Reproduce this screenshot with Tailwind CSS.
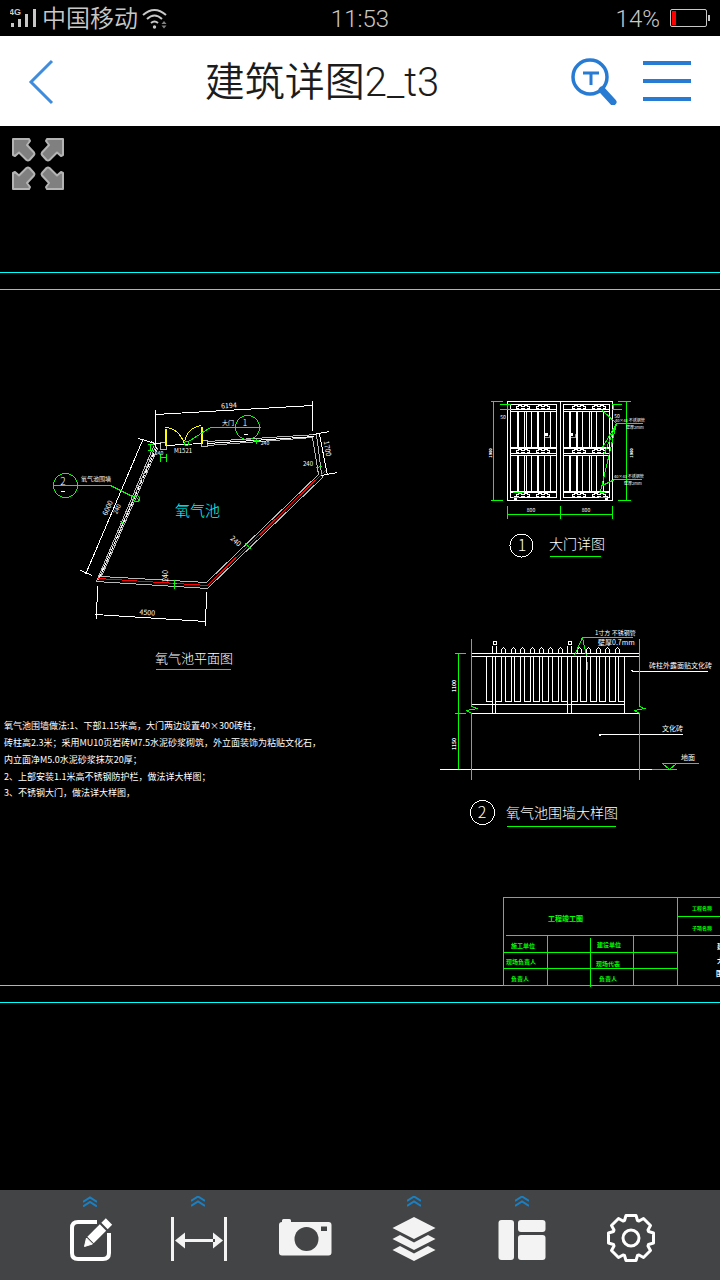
<!DOCTYPE html>
<html lang="zh-CN">
<head>
    <meta charset="UTF-8">
    <meta name="viewport" content="width=device-width, initial-scale=1.0">
    <title>建筑详图2_t3</title>
    <script src="https://cdn.jsdelivr.net/npm/@tailwindcss/browser@4"></script>
</head>
<body class="flex min-h-screen flex-col bg-black font-['Roboto','Noto_Sans_CJK_SC',sans-serif]">
    <!-- Status bar -->
    <div class="grid h-9 grid-cols-3 items-center bg-black px-[10px] pt-[2px] text-2xl font-[350] text-[#c8c8c8]">
        <div class="flex items-center gap-1">
            <svg class="h-6 w-7" viewBox="0 0 28 24" fill="currentColor">
                <text x="-1" y="8" font-size="9" font-weight="700" font-family="Liberation Sans">4G</text>
                <path d="M1 16h3v4H1zM8 12h3v8H8zM15 7h3v13h-3zM23 2h3v18h-3z"/>
            </svg>
            <span class="whitespace-nowrap">中国移动</span>
            <svg class="h-6 w-[26px]" viewBox="0 0 26 24" fill="none" stroke="currentColor" stroke-width="2">
                <path d="M1 8Q12.500 -2 24 8M5 12Q12.500 5 20 12M9 16Q12.500 13 16 16"/>
                <circle cx="12.500" cy="20" r="1.700" fill="currentColor" stroke="none"/>
                <path d="M19.500 17l2.500-3 2.500 3zM19.500 18.500l2.500 3 2.500-3z" fill="#808080" stroke="none"/>
            </svg>
        </div>
        <div class="text-center">11:53</div>
        <div class="flex items-center justify-end gap-[10px]">
            <span>14%</span>
            <svg class="h-5 w-10" viewBox="0 0 40 20">
                <rect x="0.500" y="0.500" width="36" height="17" rx="1.500" fill="none" stroke="currentColor"/>
                <path d="M38 6h2v6h-2z" fill="currentColor"/>
                <path d="M2 2h4v14H2z" fill="#ff0000"/>
            </svg>
        </div>
    </div>

    <!-- Header -->
    <header class="flex h-[90px] items-center bg-white">
        <button class="flex h-full w-20 items-center pl-7" aria-label="返回">
            <svg class="h-12 w-7" viewBox="0 0 28 48" fill="none" stroke="#3f8cdc" stroke-width="3">
                <path d="M24 4L3 25L24 46"/>
            </svg>
        </button>
        <h1 class="flex-1 pt-1 text-center text-[40px] leading-[48px] font-[350] text-[#1c1c1c]">建筑详图2_t3</h1>
        <div class="flex items-center gap-6 pr-7 pl-[6px]">
            <button aria-label="搜索文字">
                <svg class="h-12 w-12" viewBox="0 0 48 48" fill="none" stroke="#287bd2">
                    <circle cx="20" cy="20" r="17" stroke-width="3.500"/>
                    <path d="M13 16h16M21 16v12" stroke-width="3"/>
                    <path d="M32 33L43 45" stroke-width="7" stroke-linecap="round"/>
                </svg>
            </button>
            <button aria-label="菜单">
                <svg class="h-12 w-[50px]" viewBox="0 0 50 48" stroke="#287bd2" stroke-width="4">
                    <path d="M1 6h48M1 24h48M1 42h48"/>
                </svg>
            </button>
        </div>
    </header>

    <!-- Drawing -->
    <main class="relative flex-1 bg-black">
        <svg class="block h-auto w-full font-['Noto_Sans_CJK_SC',sans-serif]" viewBox="0 126 720 1064">
            <defs>
                <path id="clasp" d="M0 -2h3v1h3v-1h3v1h2v2h-2v1H6v-1H3v1H0v-1h-2v-2h2z"/>
                <path id="picket" d="M-2 653v-4L0 647L2 649V653"/>
                <path id="post" d="M-2 653v-8M2 653v-8M-1 644v-3h3v3z"/>
            </defs>
            <g transform="translate(.5 .5)" fill="none" stroke-width="1" shape-rendering="crispEdges">
                <!-- Sheet frame -->
                <path stroke="#00ffff" d="M-1 272H720M-1 289H720M-1 985H503M-1 1002H720"/>

                <!-- Plan: walls -->
                <path stroke="#b8b8b8" d="M207 441L316 434L321 473L322 477L207 588L96 581L153 446M207 445L312 437L318 474L206 582L101 576L157 448"/>
                <path stroke="#b8b8b8" d="M98 580L155 446M160 442h6v7h-6zM201 440h6v6h-6z"/>
                <path stroke="#fff" stroke-dasharray="4 2" d="M99 577L156 447"/>
                <path stroke="#fff" d="M207 443L314 436M166 445L201 443M154 443h6M151 441l5 5"/>
                <path stroke="#ff0000" d="M98 578L207 585L326 469"/>
                <!-- Plan: dimensions -->
                <path stroke="#fff" d="M155 409V446M155 414L312 405M312 400V430M142 440L85 574M138 438L155 443M80 570L92 575M95 614L205 621M97 586L96 619M206 592L205 626M319 434L327 475M313 434L329 431M321 475L337 472"/>
                <!-- Plan: door -->
                <path stroke="#ffff00" stroke-width="2" d="M165 445V428M201 443V426"/>
                <path stroke="#ffff00" d="M165 427Q178 428 184 443M184 441Q187 427 201 425"/>
                <path stroke="#00ff00" d="M53 485H110L134 497M188 441L210 427H260M147 444h6M150 444v6M147 450h6M160 453v8M166 453v8M160 457h6M120 521l5 3M134 495l5 5M174 579v9M172 583h4M245 543l6 6M316 467l6-1M256 438v5M253 440h5"/>
                <circle stroke="#00ff00" cx="65" cy="485" r="12"/>
                <circle stroke="#00ff00" cx="247" cy="427" r="12"/>
                <circle stroke="#00ff00" cx="136" cy="498" r="3"/>
                <circle stroke="#00ff00" cx="186" cy="443" r="2"/>
                <path stroke="#fff" d="M60 491h4M243 434h4"/>
                <path stroke="#00ff00" d="M155 669H230M549 556H600M506 826H615"/>

                <!-- Door detail -->
                <path stroke="#fff" d="M507 401H612V500H507ZM560 401V500M510 404H556V497H510ZM563 404H609V497H563Z"/>
                <path stroke="#fff" d="M510 409H556M510 411H556M510 447H556M510 448H556M510 453H556M510 455H556M510 491H556M510 492H556M563 409H609M563 411H609M563 447H609M563 448H609M563 453H609M563 455H609M563 491H609M563 492H609"/>
                <path stroke="#fff" d="M517 411V447M518 411V447M524 411V447M526 411V447M531 411V447M537 411V447M538 411V447M544 411V447M550 411V447M569 411V447M570 411V447M576 411V447M577 411V447M582 411V447M589 411V447M591 411V447M596 411V447M603 411V447"/>
                <path stroke="#fff" d="M517 455V491M518 455V491M524 455V491M526 455V491M531 455V491M537 455V491M538 455V491M544 455V491M550 455V491M569 455V491M570 455V491M576 455V491M577 455V491M582 455V491M589 455V491M591 455V491M596 455V491M603 455V491"/>
                <g stroke="#fff">
                    <use href="#clasp" x="518" y="407"/><use href="#clasp" x="538" y="407"/><use href="#clasp" x="574" y="407"/><use href="#clasp" x="594" y="407"/>
                    <use href="#clasp" x="518" y="451"/><use href="#clasp" x="538" y="451"/><use href="#clasp" x="574" y="451"/><use href="#clasp" x="594" y="451"/>
                    <use href="#clasp" x="518" y="495"/><use href="#clasp" x="538" y="495"/><use href="#clasp" x="574" y="495"/><use href="#clasp" x="594" y="495"/>
                </g>
                <path fill="#fff" d="M544 432h3v3h-3zM569 432h3v3h-3zM513 495h3v4h-3zM604 495h3v4h-3z"/>
                <path stroke="#00ff00" d="M493 401V500M490 401H502M490 500H502M626 401V500M617 401H630M617 500H630M507 514H612M507 505V518M560 505V518M612 505V518M499 404H510M499 409H510M507 404V409M611 404H621M611 409H621M613 404V409M544 437h5v-3M570 437h5v-4M512 492h11M512 497h6M598 492h6M598 497h8"/>
                <path stroke="#00ff00" d="M642 423H616L602 410M616 423L602 447M616 423L603 455M616 423L600 491M641 479H614L602 485"/>
                <circle stroke="#fff" cx="521" cy="545" r="11.500"/>

                <!-- Fence detail -->
                <path stroke="#fff" d="M471 653H639M471 656H639M471 704H624M471 713H639M624 656V713M492 701V713M495 701V713M567 701V713M571 701V713"/>
                <path stroke="#fff" d="M486 656h6v45h-6zM495 656h6v45h-6zM505 656h6v45h-6zM514 656h6v45h-6zM524 656h6v45h-6zM533 656h6v45h-6zM542 656h6v45h-6zM552 656h6v45h-6zM561 656h6v45h-6zM571 656h6v45h-6zM580 656h6v45h-6zM590 656h6v45h-6zM599 656h6v45h-6zM609 656h6v45h-6zM618 656h6v45h-6z"/>
                <g stroke="#fff">
                    <use href="#post" x="494"/><use href="#picket" x="503"/><use href="#picket" x="513"/><use href="#picket" x="522"/><use href="#picket" x="532"/>
                    <use href="#picket" x="541"/><use href="#picket" x="550"/><use href="#picket" x="560"/><use href="#post" x="569"/><use href="#picket" x="579"/>
                    <use href="#picket" x="588"/><use href="#picket" x="598"/><use href="#picket" x="607"/><use href="#picket" x="617"/>
                </g>
                <path stroke="#fff" d="M439 769H676M631 671H707M598 734H682M630 670h2M598 735h2"/>
                <path stroke="#00ff00" d="M471 638V706L477 708L466 710L471 713V779M639 638V706L644 708L634 710L639 713V779M458 653V768M454 653H465M454 713H465M632 637H582L574 655M582 637L586 656M587 661V669M651 769H676M661 763H698M662 763L669 769L676 763"/>
                <circle stroke="#fff" cx="482" cy="812" r="12"/>

                <!-- Title block -->
                <path stroke="#00ff00" d="M503 985V897H720M677 897V985M677 916H720M505 935H720M503 952H677M503 968H677M503 985H720M547 935V985M590 937V986M633 935V985"/>
            </g>

            <!-- Drawing labels -->
            <g fill="#fff" font-size="13" font-weight="300">
                <text x="155" y="663">氧气池平面图</text>
                <text x="549" y="549" font-size="14">大门详图</text>
                <text x="506" y="818" font-size="14">氧气池围墙大样图</text>
                <text x="175" y="516" font-size="15" fill="#00ffff">氧气池</text>
            </g>
            <g fill="#fff" font-size="16" font-weight="300" text-anchor="middle">
                <text x="522" y="551">1</text>
                <text x="482" y="818">2</text>
                <text x="63" y="485" font-size="10">2</text>
                <text x="245" y="426" font-size="9">1</text>
            </g>
            <g fill="#fff" font-size="9">
                <text x="4" y="729">氧气池围墙做法:1、下部1.15米高，大门两边设置40×300砖柱，</text>
                <text x="4" y="746">砖柱高2.3米；采用MU10页岩砖M7.5水泥砂浆砌筑，外立面装饰为粘贴文化石，</text>
                <text x="4" y="763">内立面净M5.0水泥砂浆抹灰20厚；</text>
                <text x="4" y="780">2、上部安装1.1米高不锈钢防护栏，做法详大样图；</text>
                <text x="4" y="796">3、不锈钢大门，做法详大样图，</text>
            </g>
            <g fill="#fff" font-size="7">
                <text x="81" y="481" font-size="6">氧气池围墙</text>
                <text x="222" y="425" font-size="6">大门</text>
                <text x="649" y="668">砖柱外露面贴文化砖</text>
                <text x="662" y="731">文化砖</text>
                <text x="681" y="760">地面</text>
                <text x="595" y="635" font-size="6">1寸方 不锈钢管</text>
                <text x="598" y="645">壁厚0.7mm</text>
                <text x="615" y="422" font-size="4">40×40 不锈钢管</text>
                <text x="626" y="429" font-size="4">壁厚2mm</text>
                <text x="614" y="478" font-size="4">40×40 不锈钢管</text>
                <text x="624" y="485" font-size="4">壁厚2mm</text>
            </g>
            <g fill="#fff" font-size="7" text-anchor="middle">
                <text transform="translate(229 408) rotate(-3)">6194</text>
                <text transform="translate(147 615) rotate(4)">4500</text>
                <text transform="translate(110 509) rotate(-66)">6000</text>
                <text transform="translate(119 510) rotate(-66)" font-size="6">240</text>
                <text transform="translate(168 576) rotate(-90)">240</text>
                <text transform="translate(234 543) rotate(42)">240</text>
                <text transform="translate(325 449) rotate(80)">1700</text>
                <text x="308" y="466" font-size="6">240</text>
                <text x="265" y="445" font-size="5">240</text>
                <text x="183" y="453" font-size="6">M1521</text>
                <text x="159" y="455" font-size="5">240</text>
                <text x="531" y="512" font-size="5">800</text>
                <text x="586" y="512" font-size="5">800</text>
                <text x="503" y="419" font-size="5">50</text>
                <text x="617" y="418" font-size="5">50</text>
                <g font-weight="700">
                    <text transform="translate(492 453) rotate(-90)" font-size="4">1900</text>
                    <text transform="translate(633 453) rotate(-90)" font-size="4">1900</text>
                    <text transform="translate(456 686) rotate(-90)" font-size="5">1100</text>
                    <text transform="translate(456 744) rotate(-90)" font-size="5">1150</text>
                </g>
            </g>
            <g fill="#00ff00" font-size="6" font-weight="700">
                <text x="548" y="921" font-size="7">工程竣工图</text>
                <text x="511" y="948">施工单位</text>
                <text x="506" y="964">现场负责人</text>
                <text x="511" y="981">负责人</text>
                <text x="597" y="947">建设单位</text>
                <text x="596" y="966">现场代表</text>
                <text x="599" y="981">负责人</text>
                <text x="692" y="910" font-size="5">工程名称</text>
                <text x="692" y="930" font-size="5">子项名称</text>
            </g>
            <!-- Column that runs off the sheet view -->
            <g fill="#fff" font-size="7" font-weight="700">
                <text x="717" y="949">建</text>
                <text x="717" y="963">大</text>
                <text x="716" y="976">围</text>
            </g>
        </svg>
        <button class="absolute top-[11px] left-[11px]" aria-label="全屏">
            <svg class="h-[54px] w-[54px]" viewBox="0 0 54 54" fill="#808080" stroke="#b4b4b4" stroke-width="2" stroke-linejoin="round">
                <path id="arrow" d="M2 2H18L19 4L16 8L23 15.500Q24 17 23 18L18.500 23Q17 24 15.500 23L8 15.500L4 19L2 18Z"/>
                <use href="#arrow" transform="matrix(-1 0 0 1 54 0)"/>
                <use href="#arrow" transform="matrix(1 0 0 -1 0 54)"/>
                <use href="#arrow" transform="matrix(-1 0 0 -1 54 54)"/>
            </svg>
        </button>
    </main>

    <!-- Toolbar -->
    <nav class="grid h-[90px] grid-cols-6 bg-[#434445] px-9">
        <button class="flex flex-col items-center gap-[6px] pt-[6px]" aria-label="编辑">
            <svg class="h-[11px] w-[14px]" viewBox="0 0 14 11" fill="none" stroke="#1a80c4" stroke-width="2"><path d="M0 6L7 1.500L14 6M0 10.500L7 6L14 10.500"/></svg>
            <svg class="h-[52px] w-[60px]" viewBox="0 0 60 52" fill="none" stroke="#fff">
                <path d="M37 9H18Q12 9 12 15V40Q12 46 18 46H43Q49 46 49 40V20" stroke-width="4"/>
                <path d="M24.500 33.500L26.500 25L32.500 31Z" fill="#fff" stroke-width="1"/>
                <path d="M30.500 27L43 14.500M44.500 13L49 8.500" stroke-width="9"/>
            </svg>
        </button>
        <button class="flex flex-col items-center gap-[6px] pt-[6px]" aria-label="测量">
            <svg class="h-[11px] w-[14px]" viewBox="0 0 14 11" fill="none" stroke="#1a80c4" stroke-width="2"><path d="M0 5L7 0.500L14 5M0 10L7 5.500L14 10"/></svg>
            <svg class="h-[52px] w-[60px]" viewBox="0 0 60 52" fill="#f3f3f3">
                <path d="M3 4h3v44H3zM56 4h3v44h-3zM15 26h32v3H15zM7 27.500L17 19.500V35.500ZM55 27.500L45 19.500V35.500Z"/>
            </svg>
        </button>
        <button class="flex flex-col items-center pt-[23px]" aria-label="拍照">
            <svg class="h-[52px] w-[60px]" viewBox="0 0 60 52" fill="#f3f3f3">
                <path d="M6 9V7.500Q6 6 7.500 6H13.500Q15 6 15 7.500V9H52.500Q55.500 9 55.500 12V39.500Q55.500 42.500 52.500 42.500H6Q3 42.500 3 39.500V12Q3 9 6 9Z"/>
                <circle cx="30.500" cy="26" r="12" fill="#434445"/>
                <path d="M45 13.500h6v4.500h-6z" fill="#434445"/>
            </svg>
        </button>
        <button class="flex flex-col items-center gap-[6px] pt-[6px]" aria-label="图层">
            <svg class="h-[11px] w-[14px]" viewBox="0 0 14 11" fill="none" stroke="#1a80c4" stroke-width="2"><path d="M0 5L7 0.500L14 5M0 10L7 5.500L14 10"/></svg>
            <svg class="h-[52px] w-[60px]" viewBox="0 0 60 52" fill="#f3f3f3">
                <path d="M30 4L51.500 15L30 26L8.500 15ZM8.500 26L16 22L30 29.500L44 22L51.500 26L30 37ZM8.500 37L16 33L30 40.500L44 33L51.500 37L30 48Z"/>
            </svg>
        </button>
        <button class="flex flex-col items-center gap-[6px] pt-[6px]" aria-label="布局">
            <svg class="h-[11px] w-[14px]" viewBox="0 0 14 11" fill="none" stroke="#1a80c4" stroke-width="2"><path d="M0 5L7 0.500L14 5M0 10L7 5.500L14 10"/></svg>
            <svg class="h-[52px] w-[60px]" viewBox="0 0 60 52" fill="#f3f3f3">
                <rect x="6.500" y="7" width="15.500" height="40" rx="3"/>
                <rect x="26" y="7" width="27.500" height="12" rx="3"/>
                <rect x="26" y="22" width="27.500" height="25" rx="3"/>
            </svg>
        </button>
        <button class="flex flex-col items-center pt-[23px]" aria-label="设置">
            <svg class="h-[52px] w-[60px]" viewBox="0 0 60 52" fill="none" stroke="#fff" stroke-width="3" stroke-linejoin="round">
                <path transform="translate(31 25)" d="M-5 -22.500H5L6.500 -17.500L8 -17L12.500 -19.500L19.500 -12.500L17 -8L17.500 -6.500L22.500 -5V5L17.500 6.500L17 8L19.500 12.500L12.500 19.500L8 17L6.500 17.500L5 22.500H-5L-6.500 17.500L-8 17L-12.500 19.500L-19.500 12.500L-17 8L-17.500 6.500L-22.500 5V-5L-17.500 -6.500L-17 -8L-19.500 -12.500L-12.500 -19.500L-8 -17L-6.500 -17.500Z"/>
                <circle cx="31" cy="25" r="8"/>
            </svg>
        </button>
    </nav>
</body>
</html>
